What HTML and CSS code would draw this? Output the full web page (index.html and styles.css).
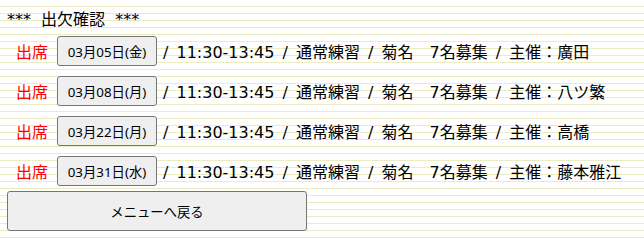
FILE: index.html
```html
<!DOCTYPE html>
<html lang="ja">
<head>
<meta charset="utf-8">
<title>出欠確認</title>
<link rel="stylesheet" href="styles.css">
</head>
<body>
<div class="title">*** 出欠確認 ***</div>
<div class="list">
  <div class="row">
    <span class="status">出席</span>
    <button class="date-btn" type="button">03月05日(金)</button>
    <span class="info">/ 11:30-13:45 / 通常練習 / 菊名　7名募集 / 主催<span class="cjk">：</span>廣田</span>
  </div>
  <div class="row">
    <span class="status">出席</span>
    <button class="date-btn" type="button">03月08日(月)</button>
    <span class="info">/ 11:30-13:45 / 通常練習 / 菊名　7名募集 / 主催<span class="cjk">：</span>八ツ繁</span>
  </div>
  <div class="row">
    <span class="status">出席</span>
    <button class="date-btn" type="button">03月22日(月)</button>
    <span class="info">/ 11:30-13:45 / 通常練習 / 菊名　7名募集 / 主催<span class="cjk">：</span>高橋</span>
  </div>
  <div class="row">
    <span class="status">出席</span>
    <button class="date-btn" type="button">03月31日(水)</button>
    <span class="info">/ 11:30-13:45 / 通常練習 / 菊名　7名募集 / 主催<span class="cjk">：</span>藤本雅江</span>
  </div>
</div>
<button class="menu-btn" type="button">メニューへ戻る</button>
</body>
</html>
```
FILE: styles.css
```css
html {
  background-color: #ffffff;
  background-image: repeating-linear-gradient(to bottom,
    #ffffff 0px, #ffffff 6px,
    #ebebc4 6px, #ebebc4 7px);
  min-height: 100%;
}
body {
  margin: 8px 7px;
  font-family: "DejaVu Sans", "Noto Sans CJK JP", sans-serif;
  font-size: 16px;
  color: #000000;
}
.title {
  height: 23px;
  line-height: 23px;
  word-spacing: 5px;
}
.list {
  display: flex;
  flex-direction: column;
}
.row {
  height: 40px;
  display: flex;
  align-items: center;
  padding-left: 9px;
}
.status {
  color: #ff0000;
  width: 32px;
  margin-right: 9px;
}
.date-btn,
.menu-btn {
  font-family: "Noto Sans", "Noto Sans CJK JP", sans-serif;
  font-size: 13.333px;
  color: #000000;
  background: #efefef;
  border: 1px solid #767676;
  border-radius: 3px;
  padding: 0;
}
.date-btn {
  width: 100px;
  height: 30px;
}
.info {
  margin-left: 6px;
  white-space: nowrap;
  word-spacing: 3px;
}
.cjk {
  display: inline-block;
  width: 1em;
  text-align: center;
  font-family: "Noto Sans CJK JP", sans-serif;
}
.menu-btn {
  display: block;
  width: 300px;
  height: 40px;
}
```
